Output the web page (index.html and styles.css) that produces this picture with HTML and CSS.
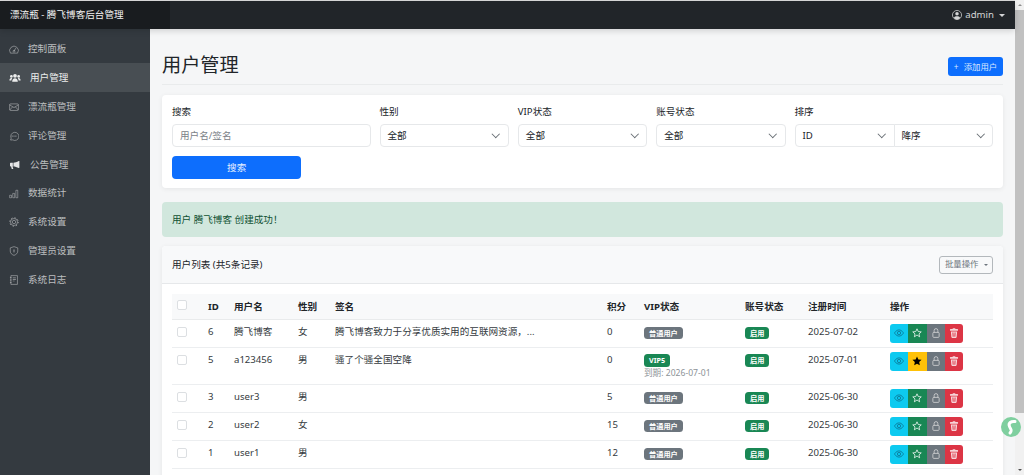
FILE: index.html
```html
<!DOCTYPE html>
<html lang="zh-CN">
<head>
<meta charset="utf-8">
<title>用户管理</title>
<link rel="stylesheet" href="styles.css">
</head>
<body>
<svg class="defs" width="0" height="0" aria-hidden="true">
  <defs>
    <symbol id="i-eye" viewBox="0 0 16 16"><path fill="none" stroke="currentColor" stroke-width="1.2" d="M.8 8S3.5 3 8 3s7.2 5 7.2 5-2.7 5-7.2 5S.8 8 .8 8z"/><circle cx="8" cy="8" r="2.6" fill="none" stroke="currentColor" stroke-width="1.2"/></symbol>
    <symbol id="i-star" viewBox="0 0 16 16"><path fill="none" stroke="currentColor" stroke-width="1.2" stroke-linejoin="round" d="M8 1.3l2 4.4 4.8.5-3.6 3.2 1 4.7L8 11.2l-4.2 2.9 1-4.7L1.200 6.200l4.800-.5z"/></symbol>
    <symbol id="i-star-fill" viewBox="0 0 16 16"><path fill="currentColor" d="M8 .8l2.200 4.700 5.100.6-3.800 3.500 1 5.100L8 12.200l-4.500 2.500 1-5.100L.7 6.100l5.100-.6z"/></symbol>
    <symbol id="i-lock" viewBox="0 0 16 16"><rect x="3" y="7" width="10" height="8" rx="1.500" fill="none" stroke="currentColor" stroke-width="1.2"/><path fill="none" stroke="currentColor" stroke-width="1.2" d="M5 7V4a3 3 0 0 1 6 0v3"/></symbol>
    <symbol id="i-trash" viewBox="0 0 16 16"><path fill="currentColor" d="M2.500 1.500h3.200l.5-1h3.600l.5 1h3.200a1 1 0 0 1 1 1v1a1 1 0 0 1-1 1H2.500a1 1 0 0 1-1-1v-1a1 1 0 0 1 1-1zM3 5.500h10l-.7 9a1.500 1.500 0 0 1-1.500 1.300H5.200a1.500 1.500 0 0 1-1.500-1.300zM5.500 7l.4 7h1L6.500 7zm2 0v7h1V7zm2 0l-.4 7h1l.4-7z"/></symbol>
  </defs>
</svg>
<div class="screen">
  <div class="page">
    <header class="navbar">
      <div class="brand">漂流瓶 - 腾飞博客后台管理</div>
      <div class="user">
        <svg class="user-icon" viewBox="0 0 16 16"><circle cx="8" cy="8" r="7.300" fill="none" stroke="currentColor" stroke-width="1.200"/><circle cx="8" cy="6" r="2.800" fill="currentColor"/><path fill="currentColor" d="M3 12.600C4 10.500 6 10 8 10s4 .5 5 2.600A6.800 6.800 0 0 1 8 15a6.800 6.800 0 0 1-5-2.400z"/></svg>
        <span>admin</span>
        <i class="caret"></i>
      </div>
    </header>
    <div class="layout">
      <nav class="sidebar">
        <a class="nav-item"><svg class="nav-icon" viewBox="0 0 16 16"><path fill="none" stroke="currentColor" stroke-width="1.100" d="M2.300 13A7 7 0 1 1 13.700 13z"/><path stroke="currentColor" stroke-width="1.200" d="M8 9.500l3-4.500"/><circle cx="8" cy="10" r="1.500" fill="none" stroke="currentColor"/></svg><span>控制面板</span></a>
        <a class="nav-item active"><svg class="nav-icon wide" viewBox="0 0 18 16"><circle cx="9" cy="4.500" r="3" fill="currentColor"/><circle cx="3.200" cy="5.500" r="2.200" fill="currentColor"/><circle cx="14.800" cy="5.500" r="2.200" fill="currentColor"/><path fill="currentColor" d="M4.500 14c0-3.500 2-5.500 4.500-5.500s4.500 2 4.500 5.500zM0 12c0-2.500 1.200-4 3.200-4 .6 0 1 .1 1.400.4C3.700 9.300 3.200 10.500 3.200 12zM18 12c0-2.500-1.200-4-3.200-4-.6 0-1 .1-1.400.4.900.9 1.400 2.100 1.400 3.600z"/></svg><span>用户管理</span></a>
        <a class="nav-item"><svg class="nav-icon" viewBox="0 0 16 16"><rect x="1" y="3" width="14" height="10.500" rx="1.500" fill="none" stroke="currentColor" stroke-width="1.100"/><path fill="none" stroke="currentColor" stroke-width="1.100" d="M1 4.500l7 4.500 7-4.500M1 13l5-5.500M15 13l-5-5.500"/></svg><span>漂流瓶管理</span></a>
        <a class="nav-item"><svg class="nav-icon" viewBox="0 0 16 16"><path fill="none" stroke="currentColor" stroke-width="1.100" d="M2.500 14.500l1-3A6.500 6.500 0 1 1 6 14.200z"/><circle cx="5" cy="8" r="1" fill="currentColor"/><circle cx="8" cy="8" r="1" fill="currentColor"/><circle cx="11" cy="8" r="1" fill="currentColor"/></svg><span>评论管理</span></a>
        <a class="nav-item filled"><svg class="nav-icon wide" viewBox="0 0 18 16"><path fill="currentColor" d="M16 1.500v11l-1 .3C12 11 9 10.300 6.500 10.200V4.500C9 4.300 12 3.500 15 1.700zM1 5.500c0-.6.400-1 1-1h3.500v5.700h-.4l1.200 4.300H3.800L2.700 10.200H2c-.6 0-1-.4-1-1z"/></svg><span>公告管理</span></a>
        <a class="nav-item"><svg class="nav-icon" viewBox="0 0 16 16"><path fill="none" stroke="currentColor" stroke-width="1" d="M1 10h3v4H1zM6 7h3v7H6zM11 2h3v12h-3z"/></svg><span>数据统计</span></a>
        <a class="nav-item"><svg class="nav-icon" viewBox="0 0 16 16"><circle cx="8" cy="8" r="2.700" fill="none" stroke="currentColor" stroke-width="1.100"/><circle cx="8" cy="8" r="5.600" fill="none" stroke="currentColor" stroke-width="1.100"/><circle cx="8" cy="8" r="6.800" fill="none" stroke="currentColor" stroke-width="1.600" stroke-dasharray="2 3.340"/></svg><span>系统设置</span></a>
        <a class="nav-item"><svg class="nav-icon" viewBox="0 0 16 16"><path fill="none" stroke="currentColor" stroke-width="1.100" d="M8 1l6 2v5c0 3.500-2.500 5.800-6 7-3.500-1.200-6-3.500-6-7V3z"/><path fill="currentColor" d="M7.200 5.500h1.600v2l-.3 3h-1l-.3-3z"/></svg><span>管理员设置</span></a>
        <a class="nav-item"><svg class="nav-icon" viewBox="0 0 16 16"><path fill="none" stroke="currentColor" stroke-width="1.100" d="M3 1h10.500v14H3zM1.500 4H4M1.500 8H4M1.500 12H4"/><path fill="currentColor" d="M6 4h5v1H6zM6 6.500h5v1H6zM6 9h3v1H6z"/></svg><span>系统日志</span></a>
      </nav>
      <main class="main">
        <div class="title-row">
          <h1 class="title">用户管理</h1>
          <button class="btn-add"><span class="plus">+</span> 添加用户</button>
        </div>
        <section class="card filter">
          <div class="filter-grid">
            <div class="field span-3"><label class="label">搜索</label><div class="control placeholder">用户名/签名</div></div>
            <div class="field span-2"><label class="label">性别</label><div class="control select">全部</div></div>
            <div class="field span-2"><label class="label">VIP状态</label><div class="control select">全部</div></div>
            <div class="field span-2"><label class="label">账号状态</label><div class="control select">全部</div></div>
            <div class="field span-3"><label class="label">排序</label>
              <div class="input-group"><div class="control select">ID</div><div class="control select">降序</div></div>
            </div>
            <div class="span-2"><button class="btn-search">搜索</button></div>
          </div>
        </section>
        <div class="alert">用户 腾飞博客 创建成功！</div>
        <section class="card list">
          <div class="list-head">
            <span>用户列表 (共5条记录)</span>
            <button class="btn-batch">批量操作<i class="caret small"></i></button>
          </div>
          <div class="list-body">
            <table class="table">
              <colgroup>
                <col class="c1"><col class="c2"><col class="c3"><col class="c4"><col class="c5"><col class="c6"><col class="c7"><col class="c8"><col class="c9"><col class="c10">
              </colgroup>
              <thead>
                <tr><th><i class="check head"></i></th><th>ID</th><th>用户名</th><th>性别</th><th>签名</th><th>积分</th><th>VIP状态</th><th>账号状态</th><th>注册时间</th><th>操作</th></tr>
              </thead>
              <tbody>
                <tr>
                  <td><i class="check"></i></td><td>6</td><td>腾飞博客</td><td>女</td><td>腾飞博客致力于分享优质实用的互联网资源，...</td><td>0</td>
                  <td><span class="badge gray">普通用户</span></td><td><span class="badge green">启用</span></td><td>2025-07-02</td>
                  <td><div class="actions"><b class="a-info"><svg><use href="#i-eye"/></svg></b><b class="a-green"><svg><use href="#i-star"/></svg></b><b class="a-gray"><svg><use href="#i-lock"/></svg></b><b class="a-red"><svg><use href="#i-trash"/></svg></b></div></td>
                </tr>
                <tr class="tall">
                  <td><i class="check"></i></td><td>5</td><td>a123456</td><td>男</td><td>骚了个骚全国空降</td><td>0</td>
                  <td><span class="badge green vip">VIP5</span><div class="expire">到期: 2026-07-01</div></td><td><span class="badge green vip">启用</span></td><td>2025-07-01</td>
                  <td><div class="actions"><b class="a-info"><svg><use href="#i-eye"/></svg></b><b class="a-yellow"><svg><use href="#i-star-fill"/></svg></b><b class="a-gray"><svg><use href="#i-lock"/></svg></b><b class="a-red"><svg><use href="#i-trash"/></svg></b></div></td>
                </tr>
                <tr>
                  <td><i class="check"></i></td><td>3</td><td>user3</td><td>男</td><td></td><td>5</td>
                  <td><span class="badge gray">普通用户</span></td><td><span class="badge green">启用</span></td><td>2025-06-30</td>
                  <td><div class="actions"><b class="a-info"><svg><use href="#i-eye"/></svg></b><b class="a-green"><svg><use href="#i-star"/></svg></b><b class="a-gray"><svg><use href="#i-lock"/></svg></b><b class="a-red"><svg><use href="#i-trash"/></svg></b></div></td>
                </tr>
                <tr>
                  <td><i class="check"></i></td><td>2</td><td>user2</td><td>女</td><td></td><td>15</td>
                  <td><span class="badge gray">普通用户</span></td><td><span class="badge green">启用</span></td><td>2025-06-30</td>
                  <td><div class="actions"><b class="a-info"><svg><use href="#i-eye"/></svg></b><b class="a-green"><svg><use href="#i-star"/></svg></b><b class="a-gray"><svg><use href="#i-lock"/></svg></b><b class="a-red"><svg><use href="#i-trash"/></svg></b></div></td>
                </tr>
                <tr>
                  <td><i class="check"></i></td><td>1</td><td>user1</td><td>男</td><td></td><td>12</td>
                  <td><span class="badge gray">普通用户</span></td><td><span class="badge green">启用</span></td><td>2025-06-30</td>
                  <td><div class="actions"><b class="a-info"><svg><use href="#i-eye"/></svg></b><b class="a-green"><svg><use href="#i-star"/></svg></b><b class="a-gray"><svg><use href="#i-lock"/></svg></b><b class="a-red"><svg><use href="#i-trash"/></svg></b></div></td>
                </tr>
              </tbody>
            </table>
          </div>
        </section>
      </main>
    </div>
  </div>
  <div class="scrollbar">
    <i class="arrow up"></i>
    <div class="thumb"></div>
    <div class="track"></div>
    <i class="arrow down"></i>
  </div>
</div>
<svg class="float-badge" viewBox="0 0 20 20"><circle cx="10" cy="10" r="10" fill="#7fcf9f"/><path fill="none" stroke="#fff" stroke-width="3" stroke-linecap="round" d="M14 4.500C10 4 7 6 8.500 9.500S11.500 13 9 16"/></svg>
</body>
</html>
```
FILE: styles.css
```css
* { box-sizing: border-box; }
html, body { margin: 0; height: 475px; overflow: hidden; }
body {
  position: relative;
  background: #f4f5f6;
  color: #212529;
  font-family: "Noto Sans", "Noto Sans CJK SC", sans-serif;
  font-size: 9.6px;
  line-height: 14.4px;
}
.defs { position: absolute; }
.screen { display: flex; height: 475px; padding-top: 1px; background: #dcdcdc; }
.page { flex: 1; min-width: 0; display: flex; flex-direction: column; }

.navbar {
  display: flex;
  align-items: center;
  justify-content: space-between;
  height: 28px;
  flex: none;
  background: #212529;
  color: #fff;
  position: relative;
  z-index: 2;
  box-shadow: 0 2px 6px rgba(0,0,0,.15);
}
.brand {
  width: 170px;
  height: 100%;
  padding-left: 10px;
  background: #191c1f;
  font-size: 9.6px;
  line-height: 28px;
  color: #f2f2f2;
}
.user { display: flex; align-items: center; gap: 3px; padding-right: 10px; font-size: 9.600px; color: #d4d5d6; }
.user-icon { width: 10px; height: 10px; }
.caret { width: 0; height: 0; margin-left: 2px; border: 3px solid transparent; border-top-color: currentColor; border-bottom: 0; }
.caret.small { border-width: 2.500px; border-bottom: 0; margin-left: 5px; }

.layout { flex: 1; min-height: 0; display: flex; }
.sidebar {
  width: 150px;
  flex: none;
  background: #343a40;
  padding-top: 5.500px;
  display: flex;
  flex-direction: column;
}
.nav-item {
  display: flex;
  align-items: center;
  gap: 9px;
  height: 28.800px;
  padding: 1.500px 0 0 9px;
  color: rgba(255,255,255,.68);
  font-size: 9.6px;
}
.nav-item.active { background: rgba(255,255,255,.1); color: #eceded; }
.nav-icon { width: 10px; height: 10px; flex: none; opacity: .8; }
.nav-icon.wide { width: 12px; opacity: 1; }
.filled .nav-icon { color: #e4e5e6; }

.main { flex: 1; min-width: 0; padding: 0 12px; overflow: hidden; background: #f5f6f7; }
.title-row {
  height: 56px;
  margin-bottom: 10px;
  padding-top: 21px;
  border-bottom: 1px solid #e9ebec;
  display: flex;
  justify-content: space-between;
  align-items: flex-start;
}
.title { margin: 0; font-size: 19.2px; line-height: 30px; font-weight: 400; }
.btn-add {
  margin-top: 7px;
  width: 55px;
  height: 19px;
  padding: 0;
  border: 0;
  border-radius: 3px;
  background: #0d6efd;
  color: #dbe9ff;
  font: inherit;
  font-size: 8.400px;
  line-height: 19px;
}
.plus { margin-right: 3px; }

.card { background: #fff; border-radius: 4px; box-shadow: 0 1px 5px rgba(0,0,0,.07); }
.filter { height: 93px; padding: 9.600px 10px; margin-bottom: 14px; }
.filter-grid { display: grid; grid-template-columns: repeat(12, 1fr); column-gap: 9px; row-gap: 9px; }
.span-3 { grid-column: span 3; }
.span-2 { grid-column: span 2; }
.label { display: block; height: 19px; font-size: 9.600px; line-height: 14px; }
.control {
  height: 23px;
  border: 1px solid #e6e8ea;
  border-radius: 4px;
  padding: 0 7px;
  font-size: 9.600px;
  line-height: 21px;
  background: #fff;
  color: #212529;
}
.placeholder { color: #7b8187; }
.select { position: relative; }
.select::after {
  content: "";
  position: absolute;
  right: 9px;
  top: 6.500px;
  width: 4.500px;
  height: 4.500px;
  border-right: 1px solid #646a70;
  border-bottom: 1px solid #646a70;
  transform: rotate(45deg);
}
.input-group { display: flex; }
.input-group .control { flex: 1; min-width: 0; }
.input-group .control:first-child { flex: none; width: 100px; border-radius: 4px 0 0 4px; }
.input-group .control:last-child { border-radius: 0 4px 4px 0; margin-left: -1px; }
.btn-search {
  display: block;
  width: 100%;
  height: 23px;
  padding: 2px 0 0;
  border: 0;
  border-radius: 4px;
  background: #0d6efd;
  color: #e7f0ff;
  font: inherit;
  font-size: 9.600px;
}

.alert {
  height: 35px;
  margin-bottom: 9px;
  padding-left: 10px;
  border-radius: 4px;
  background: #d1e7dd;
  color: #0f5132;
  line-height: 36px;
  font-size: 9.600px;
}

.list-head {
  height: 38px;
  padding: 2px 10px 0;
  display: flex;
  align-items: center;
  justify-content: space-between;
  background: #f8f9fa;
  border-bottom: 1px solid #e6e8ea;
  border-radius: 4px 4px 0 0;
}
.btn-batch {
  display: flex;
  align-items: center;
  width: 54px;
  height: 18px;
  margin-top: -2px;
  padding: 0 0 0 5px;
  border: 1px solid #b3b8bc;
  border-radius: 3px;
  background: transparent;
  color: #6c757d;
  font: inherit;
  font-size: 8.400px;
}
.list-body { padding: 10px 10px 12px; }
.table { width: 821px; border-collapse: collapse; table-layout: fixed; }
.c1 { width: 31px; } .c2 { width: 26px; } .c3 { width: 64px; } .c4 { width: 37px; } .c5 { width: 272px; }
.c6 { width: 37px; } .c7 { width: 101px; } .c8 { width: 63px; } .c9 { width: 82px; } .c10 { width: 108px; }
.table th {
  height: 25px;
  padding: 2px 5px 0;
  text-align: left;
  font-weight: 700;
  background: #f8f9fa;
  border-bottom: 1px solid #e9ebec;
  color: #212529;
}
.table td {
  height: 28px;
  padding: 5px 5px 0;
  vertical-align: top;
  border-bottom: 1px solid #eceef0;
  color: #343a40;
  white-space: nowrap;
}
.table .tall td { height: 37px; }
.check { display: block; width: 10px; height: 10px; border: 1px solid #dcdfe2; border-radius: 2px; background: #fff; margin-top: 2px; }
.check.head { margin-top: -4px; }
.badge {
  display: inline-block;
  height: 12px;
  padding: 0 5px;
  border-radius: 3.500px;
  color: #fff;
  font-size: 7.200px;
  font-weight: 700;
  line-height: 12px;
  vertical-align: top;
  margin-top: 2px;
}
.gray { background: #6c757d; }
.green { background: #198754; }
.vip { margin-top: 1.500px; height: 13px; line-height: 13px; }
.expire { clear: both; font-size: 8.600px; line-height: 13px; color: #8d9398; }
.actions { display: flex; width: 73px; height: 19px; margin-top: -1px; border-radius: 3px; overflow: hidden; }
.actions b { flex: 1; display: flex; align-items: center; justify-content: center; }
.actions svg { width: 10px; height: 10px; }
.a-info { background: #0dcaf0; color: #0b6d8c; }
.a-green { background: #198754; color: #fff; }
.a-yellow { background: #ffc107; color: #000; }
.a-gray { background: #6c757d; color: #ddd; }
.a-red { background: #dc3545; color: #f6d5d8; }

.scrollbar { width: 9px; flex: none; display: flex; flex-direction: column; background: #f1f1f1; margin-top: -1px; }
.thumb { height: 403px; margin-top: 2px; background: #c1c1c1; }
.track { flex: 1; }
.arrow { display: block; width: 0; height: 0; margin: 4px auto 2px; border: 2.500px solid transparent; }
.arrow.up { border-bottom-color: #8f8f8f; border-top: 0; }
.arrow.down { border-top-color: #505050; border-bottom: 0; margin: 0 auto 4px; }

.float-badge { position: absolute; left: 1001px; top: 417px; width: 20px; height: 20px; }
```
